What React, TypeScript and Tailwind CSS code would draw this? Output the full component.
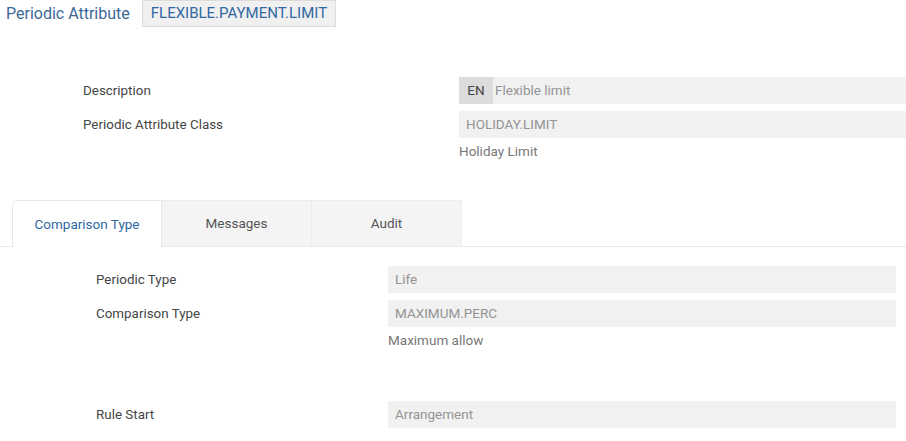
import { clsx } from 'clsx'

type Row = { label: string; value: string; hint?: string; lang?: string }

const topRows: Row[] = [
  { label: 'Description', value: 'Flexible limit', lang: 'EN' },
  { label: 'Periodic Attribute Class', value: 'HOLIDAY.LIMIT', hint: 'Holiday Limit' },
]

const tabs = ['Comparison Type', 'Messages', 'Audit']

function Field({ row, labelWidth }: { row: Row; labelWidth: string }) {
  return (
    <div className="flex">
      <div className={clsx('text-[13.4px] text-[#454545] leading-[27px] shrink-0', labelWidth)}>{row.label}</div>
      <div className="flex-1 flex flex-col">
        <div className="h-[27px] bg-[#f1f1f1] flex items-center text-[13.5px] text-[#949494]">
          {row.lang ? (
            <>
              <span className="h-full w-[34px] bg-[#dcdcdc] text-[#444] flex items-center justify-center">{row.lang}</span>
              <span className="pl-[2px]">{row.value}</span>
            </>
          ) : (
            <span className="pl-[7px]">{row.value}</span>
          )}
        </div>
        {row.hint && <div className="text-[13.5px] text-[#777] leading-[16px] mt-[5px]">{row.hint}</div>}
      </div>
    </div>
  )
}

export default function App() {
  return (
    <div className="w-[906px] h-[441px] overflow-hidden bg-white font-['Roboto',sans-serif]">
      {/* Header */}
      <div className="flex items-center pl-[6px] h-[27px]">
        <h1 className="text-[16px] text-[#3c6897] leading-none">Periodic Attribute</h1>
        <span className="ml-[12px] h-[27px] px-[8px] flex items-center bg-[#f0f0f0] border border-[#dcdcdc] text-[15px] text-[#2f68a3]">
          FLEXIBLE.PAYMENT.LIMIT
        </span>
      </div>

      {/* Main fields */}
      <div className="mt-[50px] pl-[83px] flex flex-col gap-[7px]">
        {topRows.map((row) => (
          <Field key={row.label} row={row} labelWidth="w-[376px]" />
        ))}
      </div>

      {/* Tabs */}
      <div className="mt-[41px] flex border-b border-[#e8e8e8] pl-[12px]">
        {tabs.map((tab, i) => (
          <div
            key={tab}
            className={clsx(
              'w-[150px] h-[47px] flex items-center justify-center text-[13.5px] -mb-px',
              i === 0
                ? 'bg-white text-[#2f68a3] border border-b-0 border-[#e8e8e8] rounded-tl-[6px]'
                : 'bg-[#f4f4f4] text-[#555] border-t border-r border-[#ececec] border-b border-b-[#e8e8e8]'
            )}
          >
            {tab}
          </div>
        ))}
      </div>

      {/* Tab content */}
      <div className="mt-[19px] pl-[96px] pr-[10px] flex flex-col gap-[7px]">
        <Field row={{ label: 'Periodic Type', value: 'Life' }} labelWidth="w-[292px]" />
        <Field row={{ label: 'Comparison Type', value: 'MAXIMUM.PERC', hint: 'Maximum allow' }} labelWidth="w-[292px]" />
        <div className="mt-[46px]">
          <Field row={{ label: 'Rule Start', value: 'Arrangement' }} labelWidth="w-[292px]" />
        </div>
      </div>
    </div>
  )
}
